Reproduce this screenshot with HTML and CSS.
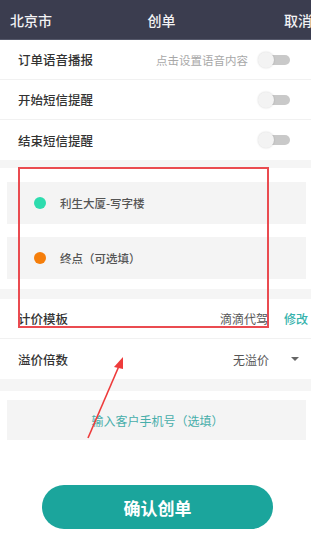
FILE: index.html
```html
<!DOCTYPE html>
<html lang="zh">
<head>
<meta charset="utf-8">
<title>创单</title>
<link rel="stylesheet" href="styles.css">
</head>
<body>
<div class="page">
  <header class="topbar">
    <span class="city">北京市</span>
    <span class="title">创单</span>
    <span class="cancel">取消</span>
  </header>

  <section class="settings">
    <div class="row">
      <span class="label">订单语音播报</span>
      <span class="row-right"><span class="hint">点击设置语音内容</span><span class="toggle"><span class="knob"></span></span></span>
    </div>
    <div class="row">
      <span class="label">开始短信提醒</span>
      <span class="row-right"><span class="toggle"><span class="knob"></span></span></span>
    </div>
    <div class="row last">
      <span class="label">结束短信提醒</span>
      <span class="row-right"><span class="toggle"><span class="knob"></span></span></span>
    </div>
  </section>

  <div class="band"></div>

  <section class="addresses">
    <div class="addr"><span class="dot dot-start"></span><span class="addr-text">利生大厦-写字楼</span></div>
    <div class="addr"><span class="dot dot-end"></span><span class="addr-text">终点（可选填）</span></div>
  </section>

  <div class="band band-10"></div>

  <section class="pricing">
    <div class="row price-row">
      <span class="label">计价模板</span>
      <span class="row-right"><span class="value">滴滴代驾</span><span class="edit">修改</span></span>
    </div>
    <div class="row price-row last">
      <span class="label">溢价倍数</span>
      <span class="row-right"><span class="value">无溢价</span><span class="caret"></span></span>
    </div>
  </section>

  <div class="band band-12"></div>

  <section class="phone">
    <div class="phone-input">输入客户手机号（选填）</div>
  </section>

  <div class="actions">
    <button class="confirm">确认创单</button>
  </div>

  <svg class="annotation" width="311" height="543" viewBox="0 0 311 543">
    <rect x="19" y="168" width="249" height="159" fill="none" stroke="#ea4b50" stroke-width="2"/>
    <line x1="88" y1="438" x2="119" y2="366" stroke="#ee3b3b" stroke-width="1.6"/>
    <polygon points="123,357 114,367 123,369" fill="#ee3b3b"/>
  </svg>
</div>
</body>
</html>
```

FILE: styles.css
```css
* { box-sizing: border-box; }
html, body {
  margin: 0;
  padding: 0;
  background: #ffffff;
}
body {
  font-family: "Noto Sans CJK SC", "Noto Sans", sans-serif;
  color: #333;
}
.page {
  position: relative;
  width: 311px;
  height: 543px;
  overflow: hidden;
  background: #fff;
}
.topbar {
  height: 40px;
  background: #3b3d4f;
  color: #f2f2f4;
  display: grid;
  grid-template-columns: 1fr auto 1fr;
  align-items: center;
  padding-left: 10px;
  font-size: 14px;
  font-weight: 500;
  line-height: 1;
  border-bottom: 1px solid #55586a;
}
.city { justify-self: start; }
.title { justify-self: center; padding-left: 2px; }
.cancel { justify-self: end; margin-right: -1px; }

.row {
  height: 40px;
  display: flex;
  align-items: center;
  justify-content: space-between;
  padding: 0 21px 0 18px;
  border-bottom: 1px solid #f1f1f1;
}
.row.last { border-bottom: none; }
.label {
  font-size: 12.5px;
  font-weight: 500;
  color: #333;
}
.row-right {
  display: flex;
  align-items: center;
}
.hint {
  font-size: 11.5px;
  color: #a8a8a8;
  margin-right: 12px;
}
.toggle {
  position: relative;
  width: 30px;
  height: 10px;
  border-radius: 5px;
  background: #c9c9c9;
  margin-left: 0;
}
.knob {
  position: absolute;
  left: -2px;
  top: -3px;
  width: 16px;
  height: 16px;
  border-radius: 50%;
  background: #f3f3f3;
  box-shadow: 0 0 2px rgba(0,0,0,0.18);
}

.band {
  height: 8px;
  background: #f5f5f5;
}
.band-10 { height: 10px; }
.band-12 { height: 12px; }

.addresses {
  padding: 14px 5px 10px 7px;
  display: flex;
  flex-direction: column;
  gap: 13px;
}
.addr {
  height: 42px;
  background: #f4f4f4;
  display: flex;
  align-items: center;
  padding-left: 27px;
}
.dot {
  width: 12px;
  height: 12px;
  border-radius: 50%;
  margin-right: 14px;
}
.dot-start { background: #2ddcae; }
.dot-end { background: #f57e0b; }
.addr-text {
  font-size: 11.5px;
  color: #555;
  font-weight: 500;
}

.price-row {
  padding-right: 3px;
  height: 40px;
}
.value {
  font-size: 12px;
  color: #555;
}
.edit {
  font-size: 12px;
  color: #35b2ac;
  font-weight: 500;
  margin-left: 16px;
}
.caret {
  width: 0;
  height: 0;
  border-left: 4px solid transparent;
  border-right: 4px solid transparent;
  border-top: 4px solid #666;
  margin-left: 22px;
  margin-right: 9px;
}

.phone {
  padding: 9px 5px 0 7px;
}
.phone-input {
  height: 40px;
  background: #f4f4f4;
  display: flex;
  align-items: center;
  justify-content: center;
  font-size: 12px;
  color: #47aeaa;
  padding-left: 2px;
}

.actions {
  display: flex;
  justify-content: center;
  padding-top: 45px;
  padding-left: 4px;
}
.confirm {
  width: 231px;
  height: 44px;
  border: none;
  border-radius: 22px;
  background: #1ba59c;
  color: #fff;
  font-family: "Noto Sans CJK SC", "Noto Sans", sans-serif;
  font-size: 17px;
  font-weight: 700;
  padding: 0;
}

.annotation {
  position: absolute;
  left: 0;
  top: 0;
  pointer-events: none;
}
```
